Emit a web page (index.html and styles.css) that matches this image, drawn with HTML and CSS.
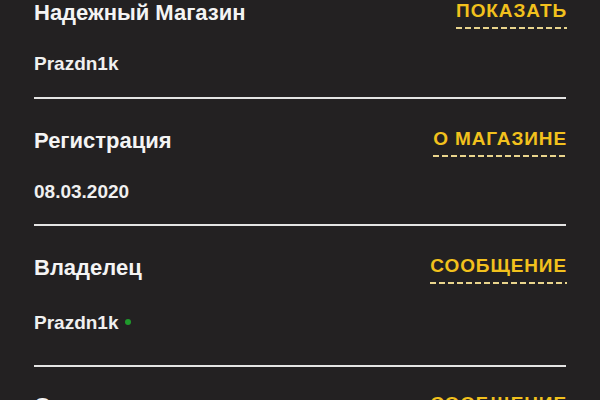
FILE: index.html
```html
<!DOCTYPE html>
<html lang="ru">
<head>
<meta charset="utf-8">
<title>Магазин</title>
<link rel="stylesheet" href="styles.css">
</head>
<body>
<div class="list">
  <section class="item item--first">
    <div class="row">
      <h2 class="title">Надежный Магазин</h2>
      <a class="link" href="#">ПОКАЗАТЬ</a>
    </div>
    <div class="sub">Prazdn1k</div>
  </section>
  <section class="item">
    <div class="row">
      <h2 class="title">Регистрация</h2>
      <a class="link" href="#">О МАГАЗИНЕ</a>
    </div>
    <div class="sub">08.03.2020</div>
  </section>
  <section class="item item--owner">
    <div class="row">
      <h2 class="title">Владелец</h2>
      <a class="link" href="#">СООБЩЕНИЕ</a>
    </div>
    <div class="sub">Prazdn1k <span class="online"></span></div>
  </section>
  <section class="item item--next">
    <div class="row">
      <h2 class="title">Отзывы</h2>
      <a class="link" href="#">СООБЩЕНИЕ</a>
    </div>
    <div class="sub">0</div>
  </section>
</div>
</body>
</html>
```

FILE: styles.css
```css
html, body {
  margin: 0;
  padding: 0;
  background: #232122;
}
body {
  font-family: "Liberation Sans", Arial, sans-serif;
  color: #f2f2f2;
  overflow: hidden;
  height: 400px;
}
.list {
  padding: 0 34px;
}
.item {
  padding: 29px 0 21px;
  border-bottom: 2px solid #e4e4e4;
}
.item--first {
  padding-top: 0;
  padding-bottom: 22px;
}
.item--owner .sub {
  margin-top: 31px;
}
.item--owner {
  padding-bottom: 31px;
}
.item--next {
  padding-top: 26px;
}
.row {
  display: flex;
  justify-content: space-between;
  align-items: flex-start;
}
.title {
  margin: 0;
  font-size: 22px;
  line-height: 26px;
  font-weight: bold;
  color: #f4f4f4;
}
.link {
  font-size: 19px;
  line-height: 22px;
  font-weight: bold;
  letter-spacing: 0.9px;
  margin-right: -1px;
  color: #f2c11d;
  text-decoration: none;
  padding-bottom: 7px;
  margin-bottom: -3px;
  background: repeating-linear-gradient(to right, #e9d48c 0 6px, transparent 6px 9px) left bottom / 100% 2px no-repeat;
}
.sub {
  margin-top: 27px;
  font-size: 19px;
  line-height: 22px;
  font-weight: bold;
  color: #f0f0f0;
  display: flex;
  align-items: center;
}
.online {
  display: inline-block;
  width: 6px;
  height: 6px;
  border-radius: 50%;
  background: #1f9a2c;
  margin-left: 7px;
  margin-top: -3px;
}
```
